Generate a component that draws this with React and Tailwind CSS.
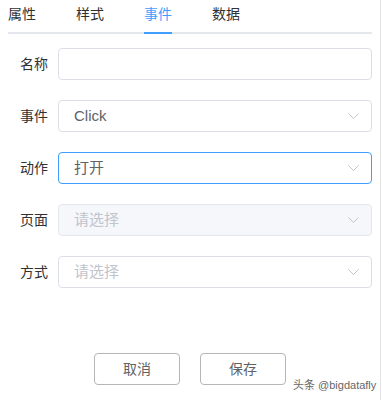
import { useState } from 'react';

const tabs = ['属性', '样式', '事件', '数据'];

function Chevron() {
    return (
        <svg width="11" height="6" viewBox="0 0 11 6" fill="none" className="shrink-0">
            <path d="M0.5 0.5 L5.5 5.5 L10.5 0.5" stroke="#c0c4cc" strokeWidth="1" />
        </svg>
    );
}

function Row({ label, children }) {
    return (
        <div className="flex items-center">
            <div className="w-[40px] text-right text-[14px] text-[#303133] mr-[10px] leading-none">{label}</div>
            <div className="flex-1">{children}</div>
        </div>
    );
}

function Select({ value, placeholder, focused, disabled }) {
    const border = focused
        ? 'border-[#409eff]'
        : disabled
        ? 'border-[#e4e7ed] bg-[#f5f7fa]'
        : 'border-[#dcdfe6] bg-white';
    return (
        <div className={`h-[32px] rounded-[4px] border flex items-center pl-[15px] pr-[12px] ${border}`}>
            <span className={`flex-1 text-[15px] ${value ? 'text-[#606266]' : 'text-[#c0c4cc]'}`}>
                {value || placeholder}
            </span>
            <Chevron />
        </div>
    );
}

export default function App() {
    const [tab, setTab] = useState(2);

    return (
        <div
            className="relative w-[382px] h-[400px] bg-white overflow-hidden"
            style={{ fontFamily: '"Liberation Sans", "Noto Sans CJK SC", sans-serif' }}
        >
            <div className="w-[381px] h-[400px] border-r border-[#e4e4e4] px-[8px]">
                {/* Tabs */}
                <div className="flex gap-[40px] h-[34px] border-b-2 border-[#e4e7ed]">
                    {tabs.map((t, i) => (
                        <button
                            key={t}
                            onClick={() => setTab(i)}
                            className={`relative text-[14px] leading-none pb-[5px] ${
                                tab === i ? 'text-[#409eff]' : 'text-[#303133]'
                            }`}
                        >
                            {t}
                            {tab === i && (
                                <span className="absolute left-0 right-0 -bottom-[2px] h-[2px] bg-[#409eff]" />
                            )}
                        </button>
                    ))}
                </div>

                {/* Form */}
                <div className="flex flex-col gap-[20px] pt-[14px]">
                    <Row label="名称">
                        <div className="h-[32px] rounded-[4px] border border-[#dcdfe6]" />
                    </Row>
                    <Row label="事件">
                        <Select value="Click" />
                    </Row>
                    <Row label="动作">
                        <Select value="打开" focused />
                    </Row>
                    <Row label="页面">
                        <Select placeholder="请选择" disabled />
                    </Row>
                    <Row label="方式">
                        <Select placeholder="请选择" />
                    </Row>
                </div>

                {/* Buttons */}
                <div className="flex gap-[20px] mt-[65px] pl-[86px]">
                    <button className="w-[86px] h-[32px] rounded-[4px] border border-[#b4b6ba] text-[14px] text-[#606266]">取消</button>
                    <button className="w-[86px] h-[32px] rounded-[4px] border border-[#b4b6ba] text-[14px] text-[#606266]">保存</button>
                </div>
            </div>

            <div className="absolute left-[293px] top-[380px] text-[11px] text-[#666] leading-none whitespace-nowrap">头条 @bigdatafly</div>
        </div>
    );
}
